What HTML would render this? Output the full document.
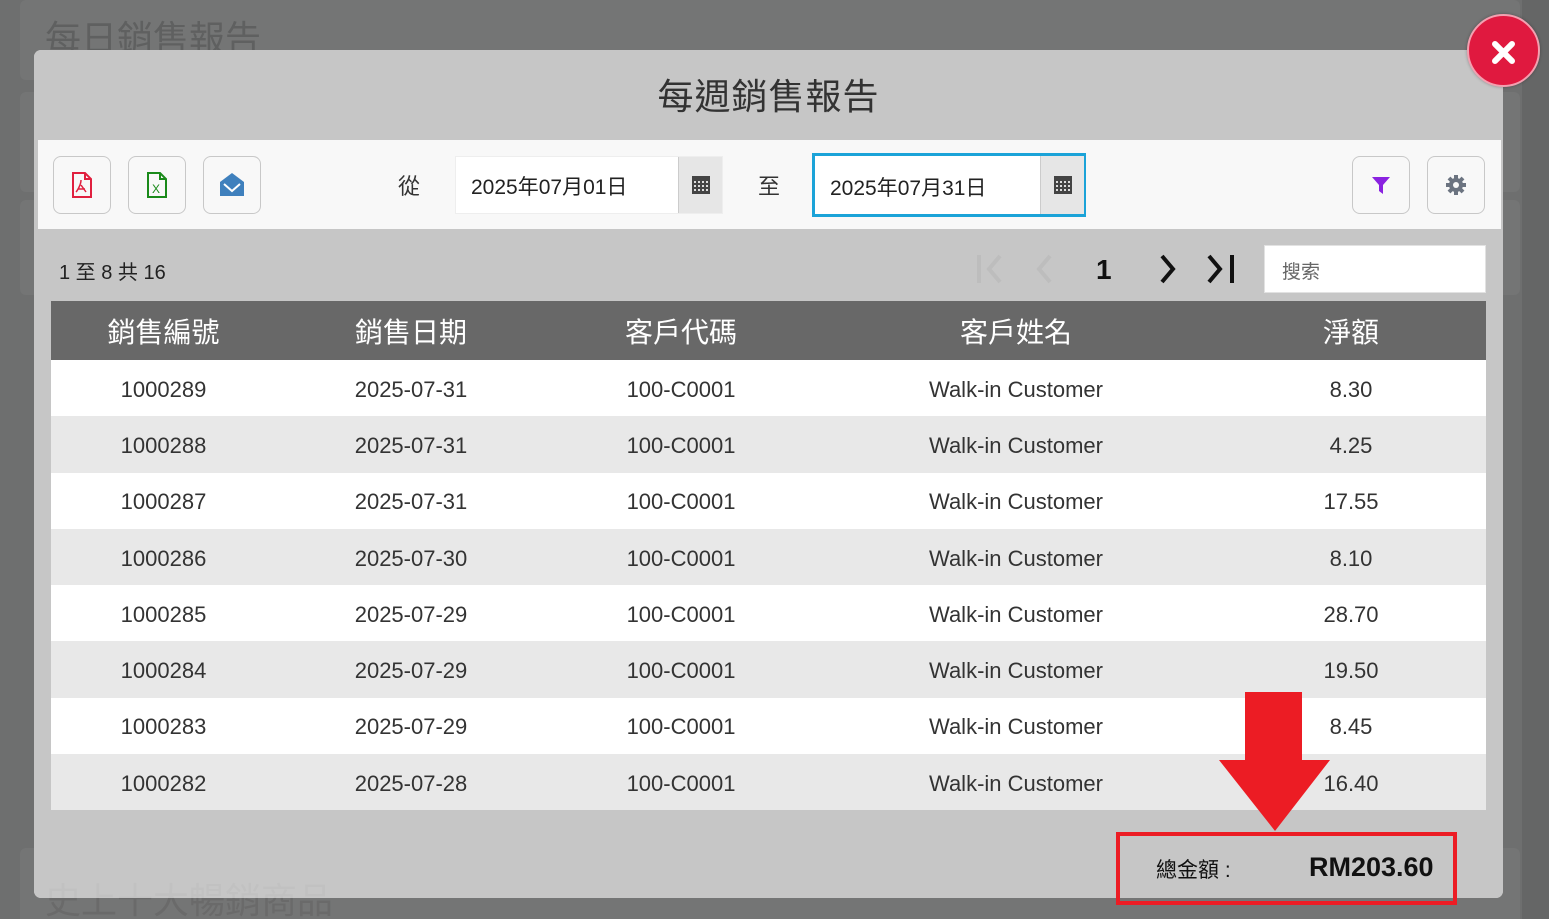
<!DOCTYPE html>
<html><head><meta charset="utf-8"><style>
*{box-sizing:border-box;margin:0;padding:0}
html,body{width:1549px;height:919px;overflow:hidden}
body{background:#6e6f6f;font-family:"Liberation Sans","Noto Sans CJK TC",sans-serif;position:relative}
.bgcard{position:absolute;left:20px;background:#747575;border-radius:6px;width:1500px}
.bgt{position:absolute;left:45px;font-size:36px;color:#5f6060}
.modal{position:absolute;left:34px;top:50px;width:1469px;height:848px;background:#c6c6c6;border-radius:7px}
.title{position:absolute;top:68px;left:34px;width:1469px;text-align:center;font-size:36px;color:#333;letter-spacing:1px}
.bar{position:absolute;left:38px;top:140px;width:1463px;height:89px;background:#f8f8f8}
.btn{position:absolute;top:156px;width:58px;height:58px;border:1px solid #c8c8c8;border-radius:8px;background:#f8f8f8;display:flex;align-items:center;justify-content:center}
.lbl{position:absolute;top:169px;font-size:22px;color:#333}
.inp{position:absolute;top:156px;height:58px;background:#fff;border:1px solid #eee;font-size:21px;color:#222;padding:14px 0 0 15px}
.cal{position:absolute;width:44px;background:#e6e6e6;border-left:1px solid #ccc;display:flex;align-items:center;justify-content:center}
table{position:absolute;left:51px;top:301px;width:1435px;border-collapse:collapse;font-size:22px;color:#333}
th{background:#686868;color:#fff;font-weight:normal;font-size:28px;height:59px}
td{height:56.3px;text-align:center;padding-top:3px}
tr:nth-child(odd) td{background:#e8e8e8}
tr:nth-child(even) td{background:#fff}
</style></head><body>
<div class="bgcard" style="top:0;height:80px"></div>
<div class="bgcard" style="top:92px;height:100px"></div>
<div class="bgcard" style="top:200px;height:95px"></div>
<div class="bgcard" style="top:848px;height:80px"></div>
<div class="bgt" style="top:10px">每日銷售報告</div>
<div style="position:absolute;left:1522px;top:0;width:27px;height:919px;background:#656666"></div>
<div class="modal"></div>
<div class="bgt" style="top:872px;color:#6a6a6a">史上十大暢銷商品</div>
<div class="modal" style="background:rgba(198,198,198,0.95)"></div>
<div class="title">每週銷售報告</div>
<div class="bar"></div>
<div class="btn" style="left:53px"><svg width="24" height="26" viewBox="0 0 24 26"><path d="M3 1h12l6 6v18H3z M15 1v6h6" fill="none" stroke="#e0203f" stroke-width="2"/><path d="M11 8c0 5 -4 11 -5 12M11 13l5 7M8 17h7" stroke="#e0203f" stroke-width="1.5" fill="none"/></svg></div>
<div class="btn" style="left:128px"><svg width="24" height="26" viewBox="0 0 24 26"><path d="M3 1h12l6 6v18H3z M15 1v6h6" fill="none" stroke="#1a8a1a" stroke-width="2"/><text x="7" y="21" font-size="12" fill="#1a8a1a" font-family="Liberation Sans">X</text></svg></div>
<div class="btn" style="left:203px"><svg width="26" height="26" viewBox="0 0 26 26"><path d="M1 10L13 1l12 9v14H1z" fill="#3f80bd"/><path d="M5 12l8 7 8-7" stroke="#fff" stroke-width="2" fill="none"/></svg></div>
<div class="lbl" style="left:398px">從</div>
<div class="inp" style="left:455px;width:268px">2025年07月01日</div>
<div class="cal" style="left:678px;top:157px;height:56px"><svg width="18" height="18"><rect x="0" y="0" width="18" height="18" fill="#444"/><g fill="#ddd"><rect x="2" y="5" width="2" height="2"/><rect x="6" y="5" width="2" height="2"/><rect x="10" y="5" width="2" height="2"/><rect x="14" y="5" width="2" height="2"/><rect x="2" y="9" width="2" height="2"/><rect x="6" y="9" width="2" height="2"/><rect x="10" y="9" width="2" height="2"/><rect x="14" y="9" width="2" height="2"/><rect x="2" y="13" width="2" height="2"/><rect x="6" y="13" width="2" height="2"/><rect x="10" y="13" width="2" height="2"/><rect x="14" y="13" width="2" height="2"/></g></svg></div>
<div class="lbl" style="left:758px">至</div>
<div class="inp" style="left:812px;top:153px;height:64px;width:274px;border:3px solid #1ba3d8;padding-top:16px">2025年07月31日</div>
<div class="cal" style="left:1040px;top:156px;height:58px"><svg width="18" height="18"><rect x="0" y="0" width="18" height="18" fill="#444"/><g fill="#ddd"><rect x="2" y="5" width="2" height="2"/><rect x="6" y="5" width="2" height="2"/><rect x="10" y="5" width="2" height="2"/><rect x="14" y="5" width="2" height="2"/><rect x="2" y="9" width="2" height="2"/><rect x="6" y="9" width="2" height="2"/><rect x="10" y="9" width="2" height="2"/><rect x="14" y="9" width="2" height="2"/><rect x="2" y="13" width="2" height="2"/><rect x="6" y="13" width="2" height="2"/><rect x="10" y="13" width="2" height="2"/><rect x="14" y="13" width="2" height="2"/></g></svg></div>
<div class="btn" style="left:1352px"><svg width="20" height="20" viewBox="0 0 20 20"><path d="M1 2h18l-7 8v9l-4-3v-6z" fill="#8a22e0"/></svg></div>
<div class="btn" style="left:1427px"><svg width="22" height="22" viewBox="0 0 22 22"><circle cx="11" cy="11" r="7" fill="#6b7380"/><g stroke="#6b7380" stroke-width="4"><path d="M11 1v20M1 11h20M4 4l14 14M18 4L4 18"/></g><circle cx="11" cy="11" r="3" fill="#f8f8f8"/></svg></div>
<div style="position:absolute;left:59px;top:256px;font-size:20px;color:#222">1 至 8 共 16</div>
<svg style="position:absolute;left:976px;top:253px" width="270" height="32" viewBox="0 0 270 32"><g fill="none" stroke-width="4"><path d="M3 2v28M24 3L13 16l11 13" stroke="#bdbdbd"/><path d="M74 3L63 16l11 13" stroke="#bdbdbd"/><path d="M186 3l11 13-11 13" stroke="#111"/><path d="M233 3l11 13-11 13M256 2v28" stroke="#111"/></g></svg>
<div style="position:absolute;left:1096px;top:254px;font-size:28px;font-weight:bold;color:#111">1</div>
<div style="position:absolute;left:1264px;top:245px;width:222px;height:48px;background:#fff;border:1px solid #e2e2e2;font-size:19px;color:#666;padding:11px 0 0 17px">搜索</div>
<table>
<colgroup><col style="width:225px"><col style="width:270px"><col style="width:270px"><col style="width:400px"><col style="width:270px"></colgroup>
<tr><th>銷售編號</th><th>銷售日期</th><th>客戶代碼</th><th>客戶姓名</th><th>淨額</th></tr>
<tr><td>1000289</td><td>2025-07-31</td><td>100-C0001</td><td>Walk-in Customer</td><td>8.30</td></tr>
<tr><td>1000288</td><td>2025-07-31</td><td>100-C0001</td><td>Walk-in Customer</td><td>4.25</td></tr>
<tr><td>1000287</td><td>2025-07-31</td><td>100-C0001</td><td>Walk-in Customer</td><td>17.55</td></tr>
<tr><td>1000286</td><td>2025-07-30</td><td>100-C0001</td><td>Walk-in Customer</td><td>8.10</td></tr>
<tr><td>1000285</td><td>2025-07-29</td><td>100-C0001</td><td>Walk-in Customer</td><td>28.70</td></tr>
<tr><td>1000284</td><td>2025-07-29</td><td>100-C0001</td><td>Walk-in Customer</td><td>19.50</td></tr>
<tr><td>1000283</td><td>2025-07-29</td><td>100-C0001</td><td>Walk-in Customer</td><td>8.45</td></tr>
<tr><td>1000282</td><td>2025-07-28</td><td>100-C0001</td><td>Walk-in Customer</td><td>16.40</td></tr>
</table>
<div style="position:absolute;left:1116px;top:832px;width:341px;height:73px;border:4px solid #ec1c24"></div>
<div style="position:absolute;left:1156px;top:854px;font-size:21px;color:#111">總金額 :</div>
<div style="position:absolute;left:1309px;top:852px;font-size:27px;font-weight:bold;color:#111">RM203.60</div>
<svg style="position:absolute;left:1217px;top:691px" width="116" height="142" viewBox="0 0 116 142"><path d="M28 1h57v68h28L58 140 2 69h26z" fill="#ec1c24"/></svg>
<div style="position:absolute;left:1467px;top:14px;width:73px;height:73px;border-radius:50%;background:#e0193f;border:2px solid #f3a0b0;box-shadow:0 0 3px rgba(0,0,0,.3)"></div>
<svg style="position:absolute;left:1492px;top:41px" width="23" height="23" viewBox="0 0 23 23"><path d="M3 3l17 17M20 3L3 20" stroke="#fff" stroke-width="6" stroke-linecap="round"/></svg>
</body></html>
